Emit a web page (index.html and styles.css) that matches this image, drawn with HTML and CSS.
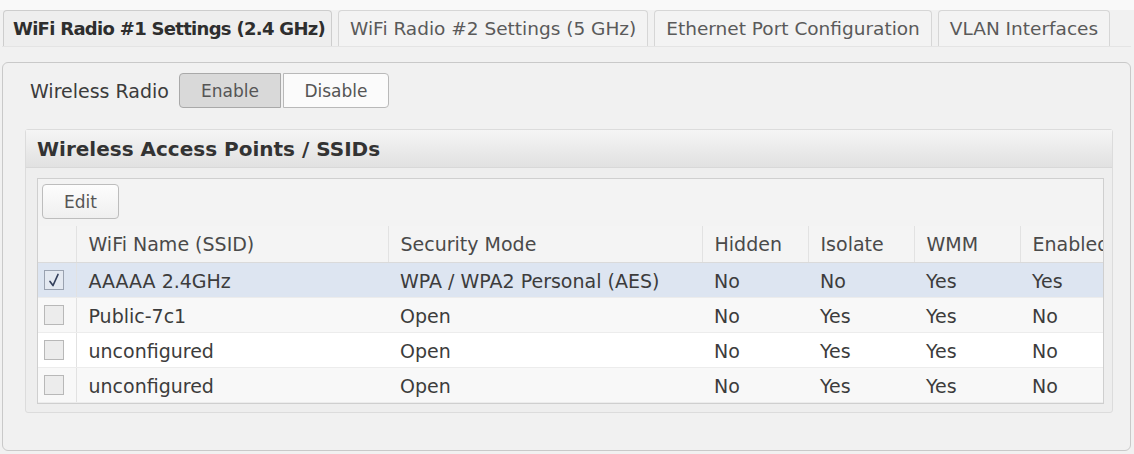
FILE: index.html
```html
<!DOCTYPE html>
<html lang="en">
<head>
<meta charset="utf-8">
<title>WiFi Radio Settings</title>
<link rel="stylesheet" href="styles.css">
</head>
<body>
<div class="page">
  <div class="tabs">
    <div class="tab active">WiFi Radio #1 Settings (2.4 GHz)</div>
    <div class="tab">WiFi Radio #2 Settings (5 GHz)</div>
    <div class="tab">Ethernet Port Configuration</div>
    <div class="tab">VLAN Interfaces</div>
  </div>
  <div class="panel">
    <div class="radio-row">
      <span class="radio-label">Wireless Radio</span>
      <div class="seg">
        <button class="seg-btn on">Enable</button>
        <button class="seg-btn off">Disable</button>
      </div>
    </div>
    <div class="section">
      <div class="section-head">Wireless Access Points / SSIDs</div>
      <div class="section-body">
        <div class="grid-box">
          <div class="toolbar"><button class="btn">Edit</button></div>
          <div class="table-wrap">
            <table class="ssids">
              <colgroup>
                <col class="c-check"><col class="c-ssid"><col class="c-sec"><col class="c-sm"><col class="c-sm"><col class="c-sm"><col class="c-last">
              </colgroup>
              <thead>
                <tr>
                  <th></th><th>WiFi Name (SSID)</th><th>Security Mode</th><th>Hidden</th><th>Isolate</th><th>WMM</th><th>Enabled</th>
                </tr>
              </thead>
              <tbody>
                <tr class="sel">
                  <td class="chk"><span class="box checked"><svg width="14" height="14" viewBox="0 0 14 14"><polyline points="3,8.5 6,12.5 11,1.5" fill="none" stroke="#34405c" stroke-width="1.7" stroke-linecap="round" stroke-linejoin="round"/></svg></span></td><td>AAAAA 2.4GHz</td><td>WPA / WPA2 Personal (AES)</td><td>No</td><td>No</td><td>Yes</td><td>Yes</td>
                </tr>
                <tr class="alt">
                  <td class="chk"><span class="box"></span></td><td>Public-7c1</td><td>Open</td><td>No</td><td>Yes</td><td>Yes</td><td>No</td>
                </tr>
                <tr>
                  <td class="chk"><span class="box"></span></td><td>unconfigured</td><td>Open</td><td>No</td><td>Yes</td><td>Yes</td><td>No</td>
                </tr>
                <tr class="alt">
                  <td class="chk"><span class="box"></span></td><td>unconfigured</td><td>Open</td><td>No</td><td>Yes</td><td>Yes</td><td>No</td>
                </tr>
              </tbody>
            </table>
          </div>
        </div>
      </div>
    </div>
  </div>
</div>
</body>
</html>
```
FILE: styles.css
```css
* { box-sizing: border-box; }
html, body { margin: 0; padding: 0; }
body {
  background: #f3f3f3;
  font-family: "DejaVu Sans", "Liberation Sans", sans-serif;
  color: #3a3a3a;
  width: 1134px;
  height: 454px;
  overflow: hidden;
}
.page {
  padding: 10px 3px 0 2px;
  background: linear-gradient(#f9f9f9 0, #f9f9f9 10px, #f1f1f1 10px);
  height: 454px;
}

.tabs {
  display: flex;
  gap: 6px;
  height: 37px;
  padding-left: 1px;
  border-bottom: 1px solid #e4e4e4;
}
.tab {
  height: 36px;
  display: flex;
  align-items: center;
  padding: 0 11px;
  font-size: 18.5px;
  color: #5a5a5a;
  background: #f3f3f3;
  border: 1px solid #d6d6d6;
  border-bottom: none;
  border-radius: 4px 4px 0 0;
  white-space: nowrap;
}
.tab.active {
  font-size: 18px;
  font-weight: bold;
  letter-spacing: -0.7px;
  color: #2e2e2e;
  background: #eeeeee;
  border-color: #cdcdcd;
  padding: 0 6px 0 9px;
}

.panel {
  margin-top: 15px;
  height: 389px;
  background: #f1f1f1;
  border: 1px solid #c9c9c9;
  border-radius: 6px;
  padding: 10px 17px 0 22px;
}
.radio-row {
  display: flex;
  align-items: center;
  gap: 10px;
  padding-left: 5px;
  height: 35px;
}
.radio-label { font-size: 19px; color: #3c3c3c; }
.seg { display: flex; gap: 2px; }
.seg-btn {
  font-family: inherit;
  font-size: 17px;
  color: #555;
  height: 35px;
  padding: 0;
  border: 1px solid #b9b9b9;
}
.seg-btn.on {
  width: 102px;
  background: #d9d9d9;
  border-radius: 4px 0 0 4px;
  border-color: #a9a9a9;
}
.seg-btn.off {
  width: 106px;
  background: #fbfbfb;
  border-radius: 0 4px 4px 0;
}

.section {
  margin-top: 21px;
  border: 1px solid #dcdcdc;
  border-radius: 3px;
  background: #eeeeee;
}
.section-head {
  height: 38px;
  display: flex;
  align-items: center;
  padding-left: 11px;
  font-size: 20px;
  font-weight: bold;
  color: #333;
  background: linear-gradient(#f5f5f5, #e1e1e1);
  border-bottom: 1px solid #d8d8d8;
}
.section-body { padding: 10px 8px 8px 11px; }

.grid-box {
  border: 1px solid #cfcfcf;
  background: #f3f3f3;
}
.toolbar { padding: 5px 0 7px 4px; }
.btn {
  font-family: inherit;
  font-size: 17px;
  color: #555;
  width: 77px;
  height: 35px;
  padding: 0;
  background: linear-gradient(#fdfdfd, #efefef);
  border: 1px solid #bdbdbd;
  border-radius: 4px;
}
.table-wrap { overflow: hidden; }
.ssids {
  border-collapse: collapse;
  table-layout: fixed;
  width: 1111px;
  font-size: 19px;
}
.c-check { width: 38px; }
.c-ssid { width: 312px; }
.c-sec { width: 314px; }
.c-sm { width: 106px; }
.c-last { width: 129px; }
.ssids th {
  height: 36px;
  text-align: left;
  font-weight: normal;
  color: #4a4a4a;
  padding: 0 12px;
  background: #f4f4f4;
  border-left: 1px solid #e2e2e2;
  border-bottom: 1px solid #dadada;
  white-space: nowrap;
}
.ssids th:first-child { border-left: none; }
.ssids td {
  height: 35px;
  padding: 2px 12px 0;
  white-space: nowrap;
  color: #3c3c3c;
  border-bottom: 1px solid #ececec;
}
.ssids td.chk {
  padding: 0 0 0 6px;
  border-right: 1px solid #e2e2e2;
}
.ssids tbody tr { background: #ffffff; }
.ssids tbody tr.alt { background: #f8f8f8; }
.ssids tbody tr.sel { background: #dde5f1; }
.box {
  display: flex;
  align-items: center;
  justify-content: center;
  width: 20px;
  height: 20px;
  border: 1px solid #b8b8b8;
  background: #ececec;
}
.box.checked { background: #e4e9f1; border-color: #9aa2b0; }
```
